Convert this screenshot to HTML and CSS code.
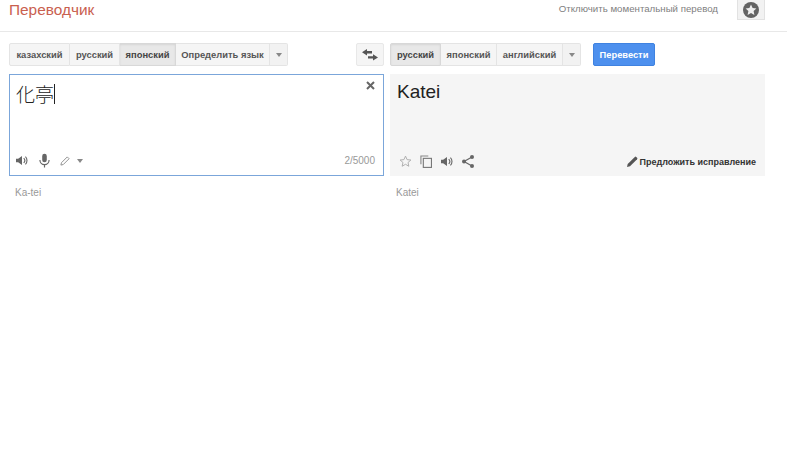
FILE: index.html
```html
<!DOCTYPE html>
<html lang="ru">

<head>
  <meta charset="UTF-8">
  <title>Переводчик</title>
  <link rel="stylesheet" href="styles.css">
</head>

<body>
  <header class="top-bar">
    <div class="logo">Переводчик</div>
    <div class="instant">Отключить моментальный перевод</div>
    <div class="star-btn">
      <svg width="18" height="18" viewBox="0 0 18 18">
        <circle cx="9" cy="9" r="8" fill="#636363"/>
        <path d="M9 3.600l1.600 3.500 3.800.4-2.800 2.600.8 3.800L9 12l-3.400 1.900.8-3.800-2.800-2.600 3.800-.4z" fill="#eee"/>
      </svg>
    </div>
  </header>

  <div class="toolbar">
    <div class="lang-group lang-group-source">
      <div class="lang-btn w-61">казахский</div>
      <div class="lang-btn w-50">русский</div>
      <div class="lang-btn w-56 active">японский</div>
      <div class="lang-btn w-94">Определить язык</div>
      <div class="lang-arrow"><span class="caret"></span></div>
    </div>
    <div class="swap-btn">
      <svg width="16" height="12" viewBox="0 0 16 12">
        <path d="M5 0L0 3.200 5 6.400V4.400h5V2H5z" fill="#555"/>
        <path d="M11 5.200l5 3.200-5 3.200V9.600H6V7.200h5z" fill="#555"/>
      </svg>
    </div>
    <div class="lang-group lang-group-target">
      <div class="lang-btn w-51 active">русский</div>
      <div class="lang-btn w-56">японский</div>
      <div class="lang-btn w-66">английский</div>
      <div class="lang-arrow"><span class="caret"></span></div>
    </div>
    <div class="translate-btn">Перевести</div>
  </div>

  <div class="panels">
    <div class="panel">
      <div class="source-box">
        <div class="source-head">
          <div class="source-text">化亭<span class="cursor"></span></div>
          <svg class="clear-icon" width="9" height="9" viewBox="0 0 9 9">
            <path d="M1 1l7 7M8 1L1 8" stroke="#666" stroke-width="2"/>
          </svg>
        </div>
        <div class="box-foot">
          <svg class="icon-speaker" width="12" height="11" viewBox="0 0 14 12">
            <path d="M0 4h2.500L7 .8v10.400L2.500 8H0z" fill="#666"/>
            <path d="M9 3.200a4 4 0 0 1 0 5.600M11 1.500a6.500 6.500 0 0 1 0 9" stroke="#666" stroke-width="1.300" fill="none"/>
          </svg>
          <svg class="icon-mic" width="11" height="15" viewBox="0 0 12 15">
            <rect x="3.500" y="0" width="5" height="9.500" rx="2.500" fill="#666"/>
            <path d="M1 7a5 5 0 0 0 10 0M6 12v3" stroke="#666" stroke-width="1.300" fill="none"/>
          </svg>
          <svg class="icon-pen" width="10" height="10" viewBox="0 0 11 11">
            <path d="M1 10l.6-2.600L8 1l2 2-6.400 6.400z" stroke="#888" fill="none"/>
          </svg>
          <span class="caret caret-pen"></span>
          <span class="counter">2/5000</span>
        </div>
      </div>
      <div class="translit">Ka-tei</div>
    </div>

    <div class="panel">
      <div class="result-box">
        <div class="result-text">Katei</div>
        <div class="box-foot">
          <svg class="icon-star" width="13" height="13" viewBox="0 0 14 14">
            <path d="M7 1.200l1.700 3.800 4.100.4-3.100 2.700.9 4-3.600-2.100-3.600 2.100.9-4L1.200 5.400l4.100-.4z" stroke="#aaa" fill="none"/>
          </svg>
          <svg class="icon-copy" width="12" height="13" viewBox="0 0 13 14">
            <path d="M1 10V1h8" stroke="#888" stroke-width="1.200" fill="none"/>
            <rect x="3.600" y="3.600" width="8.800" height="9.800" stroke="#777" stroke-width="1.200" fill="none"/>
          </svg>
          <svg class="icon-speaker" width="12" height="11" viewBox="0 0 14 12">
            <path d="M0 4h2.500L7 .8v10.400L2.500 8H0z" fill="#666"/>
            <path d="M9 3.200a4 4 0 0 1 0 5.600M11 1.500a6.500 6.500 0 0 1 0 9" stroke="#666" stroke-width="1.300" fill="none"/>
          </svg>
          <svg class="icon-share" width="12" height="13" viewBox="0 0 12 13">
            <path d="M10 2L2 6.500l8 4.500" stroke="#666" stroke-width="1.200" fill="none"/>
            <circle cx="10" cy="2" r="2" fill="#666"/>
            <circle cx="2" cy="6.500" r="2" fill="#666"/>
            <circle cx="10" cy="11" r="2" fill="#666"/>
          </svg>
          <span class="suggest">
            <svg width="11" height="11" viewBox="0 0 11 11">
              <path d="M0 11l.7-3L7.800.9a1 1 0 0 1 1.400 0l.9.9a1 1 0 0 1 0 1.400L3 10.300z" fill="#555"/>
            </svg>
            Предложить исправление
          </span>
        </div>
      </div>
      <div class="translit">Katei</div>
    </div>
  </div>
</body>

</html>
```

FILE: styles.css
```css
* {
  margin: 0;
  padding: 0;
  box-sizing: border-box;
}

body {
  width: 787px;
  height: 469px;
  background: #fff;
  font-family: 'Liberation Sans', Arial, sans-serif;
  overflow: hidden;
}

.top-bar {
  height: 32px;
  display: flex;
  align-items: flex-start;
  border-bottom: 1px solid #e8e8e8;
  padding-left: 9px;
}

.logo {
  font-size: 15.400px;
  line-height: 19px;
  color: #c9604f;
}

.instant {
  margin-left: auto;
  font-size: 9.700px;
  line-height: 17px;
  color: #808080;
}

.star-btn {
  width: 28px;
  height: 20px;
  margin-left: 19px;
  margin-right: 22px;
  display: flex;
  align-items: center;
  justify-content: center;
  background: #f2f2f2;
  border: 1px solid #e2e2e2;
  border-top: none;
}

.toolbar {
  display: flex;
  height: 23px;
  margin-top: 11px;
  padding-left: 9px;
}

.lang-group {
  display: flex;
  height: 23px;
}

.lang-group-source {
  margin-right: 68px;
}

.lang-group-target {
  margin-left: 6px;
  margin-right: 12px;
}

.lang-btn {
  display: flex;
  align-items: center;
  justify-content: center;
  font-size: 9.400px;
  font-weight: bold;
  color: #555;
  background: #f5f5f5;
  border: 1px solid #e4e4e4;
  border-left: none;
}

.lang-btn:first-child {
  border-left: 1px solid #e4e4e4;
  border-radius: 2px 0 0 2px;
}

.lang-btn.active {
  background: #e8e8e8;
  border-color: #d8d8d8;
  color: #444;
  box-shadow: inset 0 1px 2px rgba(0, 0, 0, 0.08);
}

.w-50 { width: 50px; }
.w-51 { width: 51px; }
.w-56 { width: 56px; }
.w-61 { width: 61px; }
.w-66 { width: 66px; }
.w-94 { width: 94px; }

.lang-arrow {
  width: 18px;
  display: flex;
  align-items: center;
  justify-content: center;
  background: #f2f2f2;
  border: 1px solid #e4e4e4;
  border-left: none;
  border-radius: 0 2px 2px 0;
}

.caret {
  width: 0;
  height: 0;
  border-left: 3.500px solid transparent;
  border-right: 3.500px solid transparent;
  border-top: 4px solid #888;
}

.swap-btn {
  width: 28px;
  display: flex;
  align-items: center;
  justify-content: center;
  background: #f5f5f5;
  border: 1px solid #e8e8e8;
  border-radius: 2px;
}

.translate-btn {
  width: 62px;
  display: flex;
  align-items: center;
  justify-content: center;
  font-size: 9.300px;
  font-weight: bold;
  color: #fff;
  background: #4d90ee;
  border: 1px solid #3f82e0;
  border-radius: 2px;
}

.panels {
  display: flex;
  gap: 6px;
  margin-top: 8px;
  padding-left: 9px;
}

.panel {
  width: 375px;
}

.source-box,
.result-box {
  height: 102px;
  display: flex;
  flex-direction: column;
  justify-content: space-between;
}

.source-box {
  border: 1px solid #7ba6da;
  padding: 6px 7px 7px 6px;
}

.result-box {
  background: #f5f5f5;
  padding: 6px 9px 7px 7px;
}

.source-head {
  display: flex;
  justify-content: space-between;
  align-items: flex-start;
}

.source-text {
  display: flex;
  align-items: center;
  font-family: 'Noto Sans CJK JP', sans-serif;
  font-size: 19px;
  font-weight: 300;
  line-height: 26px;
  color: #222;
}

.cursor {
  width: 1px;
  height: 20px;
  background: #222;
}

.clear-icon {
  margin-top: 0;
  margin-right: 1px;
}

.result-text {
  font-size: 19px;
  line-height: 24px;
  color: #222;
}

.box-foot {
  display: flex;
  align-items: center;
  height: 15px;
}

.icon-mic {
  margin-left: 11px;
}

.icon-pen {
  margin-left: 10px;
}

.caret-pen {
  margin-left: 7px;
}

.counter {
  margin-left: auto;
  margin-right: 1px;
  font-size: 10px;
  color: #999;
}

.result-box .icon-star {
  margin-left: 2px;
}

.icon-copy {
  margin-left: 8px;
}

.result-box .icon-speaker {
  margin-left: 9px;
}

.icon-share {
  margin-left: 9px;
}

.suggest {
  margin-left: auto;
  display: flex;
  align-items: center;
  gap: 2px;
  font-size: 9px;
  font-weight: bold;
  color: #333;
}

.translit {
  margin-top: 11px;
  padding-left: 6px;
  font-size: 10px;
  line-height: 12px;
  color: #999;
}
```
